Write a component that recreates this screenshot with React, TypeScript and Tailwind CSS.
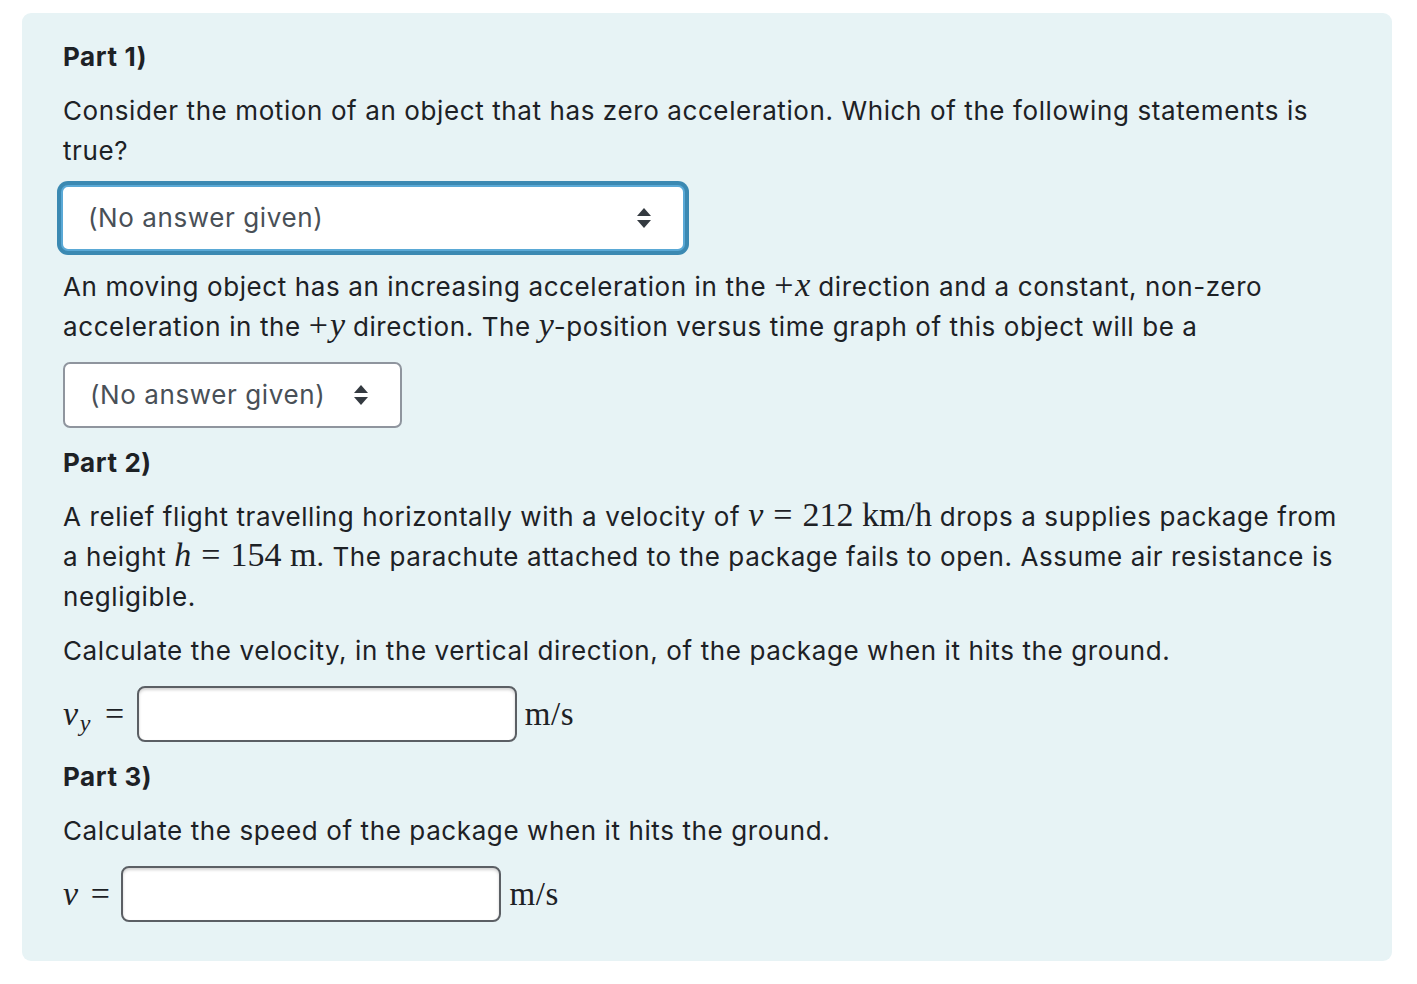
import React from 'react';

const sans = { fontFamily: 'Inter, "Liberation Sans", Arial, sans-serif' };
const serif = { fontFamily: '"Liberation Serif", "Times New Roman", serif' };

const M: React.FC<{ children: React.ReactNode; italic?: boolean; className?: string }> = ({
  children,
  italic,
  className = '',
}) => (
  <span style={serif} className={`text-[34px] leading-none tracking-normal ${italic ? 'italic' : ''} ${className}`}>
    {children}
  </span>
);

const Arrows = () => (
  <svg width="16" height="22" viewBox="0 0 16 22" className="shrink-0">
    <path d="M8 1 L15 9 L1 9 Z" fill="#343a40" />
    <path d="M8 21 L15 13 L1 13 Z" fill="#343a40" />
  </svg>
);

const Select: React.FC<{ width: string; focused?: boolean }> = ({ width, focused }) => (
  <div
    className={`${width} h-[66px] flex items-center justify-between pl-[25px] pr-[31px] bg-white rounded-[7px] text-[#495057] ${
      focused
        ? 'border-2 border-[#5aa9d6] shadow-[0_0_0_4px_#3b89b2]'
        : 'border-2 border-[#8f959e]'
    }`}
  >
    <span>(No answer given)</span>
    <Arrows />
  </div>
);

const Answer: React.FC<{ label: React.ReactNode; eqGap: string; mr: string }> = ({ label, eqGap, mr }) => (
  <div className="flex items-center mb-[15px]">
    <span style={serif} className={`text-[34px] leading-none flex items-center ${eqGap} ${mr}`}>
      {label}
      <span>=</span>
    </span>
    <div className="w-[380px] h-[56px] bg-white border-2 border-[#5b5f64] rounded-[8px] shadow-[inset_0_2px_3px_rgba(0,0,0,0.18)]" />
    <span style={serif} className="text-[33px] leading-none ml-[8px]">m/s</span>
  </div>
);

const App: React.FC = () => {
  return (
    <div className="min-h-screen bg-white pt-[13px] pl-[22px]" style={sans}>
      <div className="w-[1370px] bg-[#e7f3f5] rounded-[9px] pl-[41px] pr-[40px] pt-[24px] pb-[24px] text-[#1d2125] text-[26px] leading-[40px] tracking-[0.6px]">
        <p className="font-bold mb-[14px]">Part 1)</p>
        <p className="mb-[14px]">
          Consider the motion of an object that has zero acceleration. Which of the following statements is true?
        </p>
        <div className="mb-[16px] ml-[-2px]">
          <Select width="w-[624px]" focused />
        </div>
        <p className="mb-[15px]">
          An moving object has an increasing acceleration in the <M className="mr-[2px]">+</M>
          <M italic>x</M> direction and a constant, non-zero acceleration in the <M className="mr-[2px]">+</M>
          <M italic>y</M> direction. The <M italic>y</M>-position versus time graph of this object will be a
        </p>
        <div className="mb-[15px]">
          <Select width="w-[339px]" />
        </div>
        <p className="font-bold mb-[14px]">Part 2)</p>
        <p className="mb-[14px]">
          A relief flight travelling horizontally with a velocity of <M italic>v</M>
          <M className="mx-[10px]">=</M>
          <M>212 km/h</M> drops a supplies package from a height <M italic>h</M>
          <M className="mx-[10px]">=</M>
          <M>154 m</M>. The parachute attached to the package fails to open. Assume air resistance is negligible.
        </p>
        <p className="mb-[15px]">
          Calculate the velocity, in the vertical direction, of the package when it hits the ground.
        </p>
        <Answer
          eqGap="gap-[14px]"
          mr="mr-[12px]"
          label={
            <span className="italic">
              v<sub className="text-[24px] relative top-[6px] ml-[1px]">y</sub>
            </span>
          }
        />
        <p className="font-bold mb-[14px]">Part 3)</p>
        <p className="mb-[15px]">Calculate the speed of the package when it hits the ground.</p>
        <Answer eqGap="gap-[12px]" mr="mr-[11px]" label={<span className="italic">v</span>} />
      </div>
    </div>
  );
};

export default App;
